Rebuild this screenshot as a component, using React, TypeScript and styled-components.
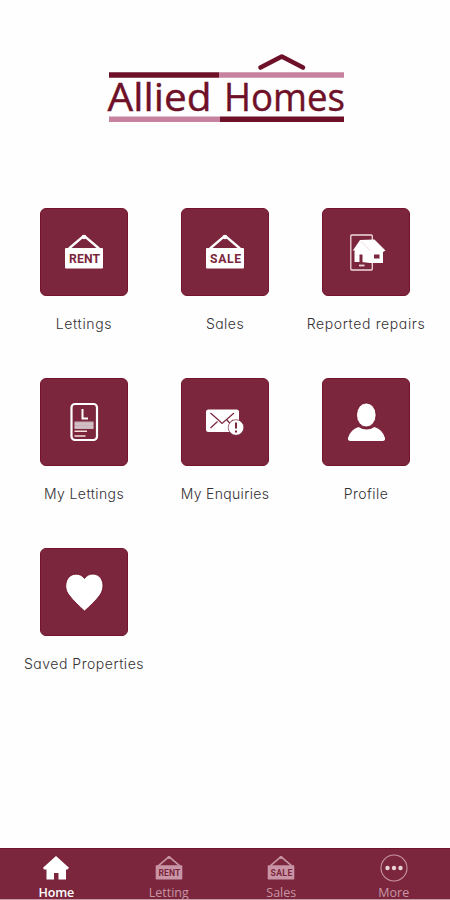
import React from 'react';
import styled, { createGlobalStyle } from 'styled-components';

const wine = '#7b263c';
const ink = '#6d1028';

const GlobalStyle = createGlobalStyle`
  * { box-sizing: border-box; }
  body { margin: 0; background: #fefefe; }
`;

const Screen = styled.div`
  width: 450px;
  height: 900px;
  display: flex;
  flex-direction: column;
  background: #fefefe;
  overflow: hidden;
`;

const Header = styled.header`
  height: 208px;
  padding: 48px 0 0 102px;
  flex: none;
  svg { display: block; }
`;

const Menu = styled.main`
  flex: 1;
  display: grid;
  grid-template-columns: repeat(3, 141px);
  grid-auto-rows: 170px;
  align-content: start;
  justify-content: center;
`;

const MenuItem = styled.div`
  display: flex;
  flex-direction: column;
  align-items: center;
`;

const Tile = styled.div`
  width: 88px;
  height: 88px;
  border-radius: 6px;
  background: ${wine};
  border: 1px solid #74142c;
  color: #fff;
  display: grid;
  place-items: center;
  svg { display: block; }
`;

const Label = styled.span<{ $spacing: number }>`
  margin-top: 18px;
  font: 300 14px/20px Inter, 'Open Sans', sans-serif;
  font-feature-settings: 'cv11';
  letter-spacing: ${(p) => p.$spacing}px;
  color: #343034;
  white-space: nowrap;
`;

const TabBar = styled.nav`
  height: 52px;
  flex: none;
  display: grid;
  grid-template-columns: repeat(4, 1fr);
  background: ${wine};
  border-top: 1px solid #70142c;
  border-bottom: 1px solid #c69ba7;
  overflow: hidden;
`;

const Tab = styled.div<{ $active?: boolean }>`
  display: flex;
  flex-direction: column;
  align-items: center;
  padding-top: 5px;
  min-height: 0;
  color: ${(p) => (p.$active ? '#fff' : '#c995a6')};
  svg { display: block; flex: none; }
`;

const TabLabel = styled.span<{ $active?: boolean }>`
  margin-top: 3px;
  font: ${(p) => (p.$active ? 600 : 400)} 12.5px/16px 'Open Sans', sans-serif;
  letter-spacing: ${(p) => (p.$active ? -0.2 : 0)}px;
`;

const Logo = () => (
  <svg width="250" height="80" viewBox="102 48 250 80">
    <path d="M260.500 67.500L281.800 56.500L303 67.500" fill="none" stroke={ink} strokeWidth="4.600" strokeLinecap="round" strokeLinejoin="round" />
    <path d="M109 75H219" stroke={ink} strokeWidth="5.500" />
    <path d="M219 75H344" stroke="#c6829f" strokeWidth="5.500" />
    <path d="M109 119.300H220" stroke="#c6829f" strokeWidth="5.500" />
    <path d="M220 119.300H344" stroke={ink} strokeWidth="5.500" />
    <text x="107.500" y="111" fill={ink} stroke={ink} strokeWidth=".4" fontFamily="'Open Sans', sans-serif" fontSize="39" textLength="104" lengthAdjust="spacingAndGlyphs">Allied</text>
    <text x="224" y="111" fill={ink} stroke={ink} strokeWidth=".4" fontFamily="'Open Sans', sans-serif" fontSize="39" textLength="121" lengthAdjust="spacingAndGlyphs">Homes</text>
  </svg>
);

const Sign = ({ word, width = 40 }: { word: string; width?: number }) => (
  <svg width={width} height={width} viewBox="0 0 40 40">
    <path d="M5 16.500L18 5.500Q20 3 22 5.500L35 16.500" fill="none" stroke="currentColor" strokeWidth="2.300" />
    <circle cx="20" cy="5" r="2.300" fill="currentColor" />
    <rect x="1" y="16" width="38" height="20.500" rx="1" fill="currentColor" />
    <text x="5" y="30.800" fontFamily="Roboto, sans-serif" fontWeight="700" fontSize="12.200" textLength="31" lengthAdjust="spacing" fill={wine}>{word}</text>
  </svg>
);

const Repairs = () => (
  <svg width="40" height="40" viewBox="0 0 40 40">
    <rect x="4.800" y="3" width="21.500" height="35" rx="1" fill="none" stroke="#f1dbe1" strokeWidth="1.300" />
    <path d="M13 33.500H18.500" stroke="#e9d3da" strokeWidth="1.800" />
    <path d="M6.500 19L14 8L28.500 7.500L39.500 18.500L37 20V31H24L16 30H8.500V18Z" fill="#fff" />
    <path d="M13.500 30V22.500H16.500V30ZM28 22.500H33.500V26.500H28Z" fill={wine} />
    <path d="M14.500 9L24.500 19" fill="none" stroke="#dfc3cc" strokeWidth=".6" />
  </svg>
);

const Document = () => (
  <svg width="40" height="40" viewBox="0 0 40 40">
    <rect x="7.500" y="2" width="25.500" height="36" rx="3.500" fill="none" stroke="#fff" strokeWidth="2.200" />
    <path d="M18.500 7V16.500H24" fill="none" stroke="#fff" strokeWidth="2" />
    <path d="M10.500 19.500H29.500V27H10.500Z" fill="#c9b2ba" />
    <path d="M10.500 22H29.500M10.500 25H29.500" stroke="#dccbd1" strokeWidth="1" />
    <path d="M10.500 29.200H23M10.500 34H21.500" stroke="#f8dfd7" strokeWidth="1.500" />
  </svg>
);

const Enquiry = () => (
  <svg width="40" height="40" viewBox="0 0 40 40">
    <rect x="1" y="7.500" width="33" height="22.500" rx="2.500" fill="#fff" />
    <path d="M5.500 11L14 18.500L17 21.500L21 18L29 11M5.500 26L12.500 19.500M22 18L25 21.500L28 18" fill="none" stroke={wine} strokeWidth="1.200" />
    <circle cx="31" cy="25.500" r="7.800" fill="#fff" stroke={wine} strokeWidth=".7" />
    <path d="M31 20.500V26.500M31 28.500V30.500" stroke={wine} strokeWidth="2" />
  </svg>
);

const Person = () => (
  <svg width="40" height="40" viewBox="0 0 40 40">
    <path d="M12.500 25Q20.500 30 28.500 25Q37 28 39 36Q39.500 39 36.500 39H4.500Q1.500 39 2 36Q4 28 12.500 25Z" fill="#fff" />
    <ellipse cx="20.300" cy="13" rx="9.800" ry="12" fill="#fff" stroke="#6a061f" strokeWidth=".8" />
  </svg>
);

const Heart = () => (
  <svg width="40" height="40" viewBox="0 0 40 40">
    <path d="M20.500 6.500C16.500 .5 7 .7 3.500 7C.6 12.500 1.500 18.500 5 23C9.500 29 15.500 34.500 20.500 39C25.500 34.500 32 28.500 36 23C39.500 18 40 11.500 37 6.500C33.500 .8 24.500 .5 20.500 6.500Z" fill="#fff" stroke="#6a061f" strokeWidth=".8" />
  </svg>
);

const House = () => (
  <svg width="28" height="28" viewBox="0 0 28 28">
    <path d="M14 2L27 13.800L25.500 15.500H24V25.500H16.500V19H12V25.500H4.500V15.500H2L1 13.800Z" fill="currentColor" />
  </svg>
);

const More = () => (
  <svg width="28" height="28" viewBox="0 0 28 28">
    <circle cx="14" cy="14" r="13" fill="none" stroke="currentColor" strokeWidth="1.100" />
    <g fill="#ead2d9">
      <circle cx="7.500" cy="14" r="2.200" />
      <circle cx="14" cy="14" r="2.200" />
      <circle cx="20.500" cy="14" r="2.200" />
    </g>
  </svg>
);

const items = [
  { label: 'Lettings', spacing: 0.65, icon: <Sign word="RENT" /> },
  { label: 'Sales', spacing: 0.45, icon: <Sign word="SALE" /> },
  { label: 'Reported repairs', spacing: 0.63, icon: <Repairs /> },
  { label: 'My Lettings', spacing: 0.42, icon: <Document /> },
  { label: 'My Enquiries', spacing: 0.32, icon: <Enquiry /> },
  { label: 'Profile', spacing: 0.45, icon: <Person /> },
  { label: 'Saved Properties', spacing: 0.52, icon: <Heart /> },
];

const tabs = [
  { label: 'Home', active: true, icon: <House /> },
  { label: 'Letting', icon: <Sign word="RENT" width={28} /> },
  { label: 'Sales', icon: <Sign word="SALE" width={28} /> },
  { label: 'More', icon: <More /> },
];

export default function App() {
  return (
    <>
      <GlobalStyle />
      <Screen>
        <Header><Logo /></Header>
        <Menu>
          {items.map((item) => (
            <MenuItem key={item.label}>
              <Tile>{item.icon}</Tile>
              <Label $spacing={item.spacing}>{item.label}</Label>
            </MenuItem>
          ))}
        </Menu>
        <TabBar>
          {tabs.map((tab) => (
            <Tab key={tab.label} $active={tab.active}>
              {tab.icon}
              <TabLabel $active={tab.active}>{tab.label}</TabLabel>
            </Tab>
          ))}
        </TabBar>
      </Screen>
    </>
  );
}
